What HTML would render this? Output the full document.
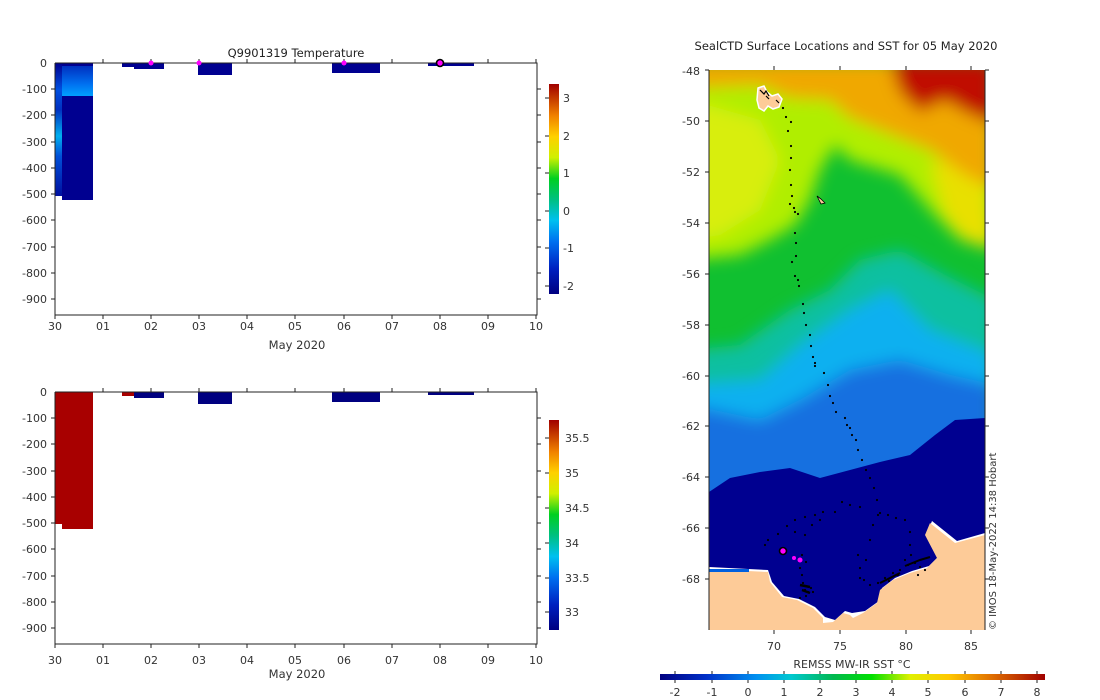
<!DOCTYPE html>
<html><head><meta charset="utf-8"><style>
html,body{margin:0;padding:0;background:#fff;width:1100px;height:700px;overflow:hidden}
svg text{font-family:"DejaVu Sans","Liberation Sans",sans-serif;font-size:11px;fill:#333}
</style></head><body>
<svg width="1100" height="700" viewBox="0 0 1100 700" xmlns="http://www.w3.org/2000/svg">
<defs>
<linearGradient id="jetv" x1="0" y1="1" x2="0" y2="0">
<stop offset="0" stop-color="#000080"/><stop offset="0.12" stop-color="#0020c0"/><stop offset="0.25" stop-color="#0070f0"/><stop offset="0.35" stop-color="#00c0f0"/><stop offset="0.45" stop-color="#00c080"/><stop offset="0.55" stop-color="#00d020"/><stop offset="0.65" stop-color="#d0f000"/><stop offset="0.75" stop-color="#ffd000"/><stop offset="0.85" stop-color="#f08000"/><stop offset="1" stop-color="#a00000"/>
</linearGradient>
<linearGradient id="jeth" x1="0" y1="0" x2="1" y2="0">
<stop offset="0" stop-color="#000080"/><stop offset="0.12" stop-color="#0030c8"/><stop offset="0.25" stop-color="#0090f0"/><stop offset="0.34" stop-color="#00c8d0"/><stop offset="0.45" stop-color="#00b850"/><stop offset="0.55" stop-color="#00e000"/><stop offset="0.65" stop-color="#e0f000"/><stop offset="0.75" stop-color="#ffc800"/><stop offset="0.86" stop-color="#e07000"/><stop offset="1" stop-color="#a00000"/>
</linearGradient>
<linearGradient id="col1" x1="0" y1="0" x2="0" y2="1">
<stop offset="0" stop-color="#000090"/><stop offset="0.2" stop-color="#0050e0"/><stop offset="0.35" stop-color="#0030c0"/><stop offset="0.55" stop-color="#00b0f0"/><stop offset="0.7" stop-color="#0050d8"/><stop offset="1" stop-color="#0010a0"/>
</linearGradient>
<linearGradient id="col2" x1="0" y1="0" x2="0" y2="1">
<stop offset="0" stop-color="#0030c0"/><stop offset="0.6" stop-color="#0070f0"/><stop offset="1" stop-color="#00a0ff"/>
</linearGradient>
<filter id="bl" x="-10%" y="-10%" width="120%" height="120%"><feGaussianBlur stdDeviation="8"/></filter>
<clipPath id="mapc"><rect x="709" y="70" width="276" height="560"/></clipPath>
</defs>

<!-- TOP PLOT -->
<text x="296" y="57" text-anchor="middle" style="font-size:11.5px;fill:#222">Q9901319  Temperature</text>
<rect x="55" y="63" width="7" height="133" fill="url(#col1)"/>
<rect x="62" y="63" width="31" height="137" fill="#000090"/>
<rect x="62" y="66" width="31" height="30" fill="url(#col2)"/>
<rect x="122" y="63" width="12" height="4" fill="#000090"/>
<rect x="134" y="63" width="30" height="6" fill="#000090"/>
<rect x="198" y="63" width="34" height="12" fill="#000090"/>
<rect x="332" y="63" width="48" height="10" fill="#000090"/>
<rect x="428" y="63" width="46" height="3" fill="#000090"/>
<g stroke="#222" fill="none" stroke-width="1">
<path d="M55,63V315H537V63H55"/>
<path d="M55,89h-4M55,115h-4M55,142h-4M55,168h-4M55,194h-4M55,220h-4M55,247h-4M55,273h-4M55,299h-4"/>
<path d="M537,89h4M537,115h4M537,142h4M537,168h4M537,194h4M537,220h4M537,247h4M537,273h4M537,299h4"/>
<path d="M55,315v4M103,315v4M151,315v4M199,315v4M247,315v4M295,315v4M344,315v4M392,315v4M440,315v4M488,315v4M536,315v4"/>
<path d="M103,63v-4M151,63v-4M199,63v-4M247,63v-4M295,63v-4M344,63v-4M392,63v-4M440,63v-4M488,63v-4M536,63v-4"/>
</g>
<g text-anchor="end">
<text x="47" y="67">0</text><text x="47" y="93">-100</text><text x="47" y="119">-200</text><text x="47" y="146">-300</text><text x="47" y="172">-400</text><text x="47" y="198">-500</text><text x="47" y="224">-600</text><text x="47" y="251">-700</text><text x="47" y="277">-800</text><text x="47" y="303">-900</text>
</g>
<g text-anchor="middle">
<text x="55" y="330">30</text><text x="103" y="330">01</text><text x="151" y="330">02</text><text x="199" y="330">03</text><text x="247" y="330">04</text><text x="295" y="330">05</text><text x="344" y="330">06</text><text x="392" y="330">07</text><text x="440" y="330">08</text><text x="488" y="330">09</text><text x="536" y="330">10</text>
<text x="297" y="349" style="font-size:11.5px">May 2020</text>
</g>
<circle cx="151" cy="63" r="2.5" fill="#ff00ff"/><circle cx="199" cy="63" r="2.5" fill="#ff00ff"/><circle cx="344" cy="63" r="2.5" fill="#ff00ff"/>
<circle cx="440" cy="63" r="3.5" fill="#ff00ff" stroke="#000" stroke-width="1.6"/>
<rect x="549" y="84" width="10" height="210" fill="url(#jetv)"/>
<g stroke="#222"><path d="M545,98h4M545,136h4M545,173h4M545,211h4M545,248h4M545,286h4"/></g>
<g><text x="563" y="102">3</text><text x="563" y="140">2</text><text x="563" y="177">1</text><text x="563" y="215">0</text><text x="563" y="252">-1</text><text x="563" y="290">-2</text></g>

<!-- BOTTOM PLOT -->
<rect x="55" y="392" width="7" height="132" fill="#a80000"/>
<rect x="62" y="392" width="31" height="137" fill="#a80000"/>
<rect x="122" y="392" width="12" height="4" fill="#a80000"/>
<rect x="134" y="392" width="30" height="6" fill="#000080"/>
<rect x="198" y="392" width="34" height="12" fill="#000080"/>
<rect x="332" y="392" width="48" height="10" fill="#000080"/>
<rect x="428" y="392" width="46" height="3" fill="#000080"/>
<g stroke="#222" fill="none" stroke-width="1">
<path d="M55,392V644H537V392H55"/>
<path d="M55,418h-4M55,444h-4M55,471h-4M55,497h-4M55,523h-4M55,549h-4M55,576h-4M55,602h-4M55,628h-4"/>
<path d="M537,418h4M537,444h4M537,471h4M537,497h4M537,523h4M537,549h4M537,576h4M537,602h4M537,628h4"/>
<path d="M55,644v4M103,644v4M151,644v4M199,644v4M247,644v4M295,644v4M344,644v4M392,644v4M440,644v4M488,644v4M536,644v4"/>
<path d="M103,392v-4M151,392v-4M199,392v-4M247,392v-4M295,392v-4M344,392v-4M392,392v-4M440,392v-4M488,392v-4M536,392v-4"/>
</g>
<g text-anchor="end">
<text x="47" y="396">0</text><text x="47" y="422">-100</text><text x="47" y="448">-200</text><text x="47" y="475">-300</text><text x="47" y="501">-400</text><text x="47" y="527">-500</text><text x="47" y="553">-600</text><text x="47" y="580">-700</text><text x="47" y="606">-800</text><text x="47" y="632">-900</text>
</g>
<g text-anchor="middle">
<text x="55" y="664">30</text><text x="103" y="664">01</text><text x="151" y="664">02</text><text x="199" y="664">03</text><text x="247" y="664">04</text><text x="295" y="664">05</text><text x="344" y="664">06</text><text x="392" y="664">07</text><text x="440" y="664">08</text><text x="488" y="664">09</text><text x="536" y="664">10</text>
<text x="297" y="678" style="font-size:11.5px">May 2020</text>
</g>
<rect x="549" y="420" width="10" height="210" fill="url(#jetv)"/>
<g stroke="#222"><path d="M545,438h4M545,473h4M545,508h4M545,543h4M545,578h4M545,612h4"/></g>
<g><text x="565" y="442">35.5</text><text x="565" y="477">35</text><text x="565" y="512">34.5</text><text x="565" y="547">34</text><text x="565" y="582">33.5</text><text x="565" y="616">33</text></g>

<!-- MAP -->
<text x="846" y="50" text-anchor="middle" style="font-size:11.5px;fill:#222">SealCTD Surface Locations and SST for 05 May 2020</text>
<g clip-path="url(#mapc)">
<rect x="700" y="60" width="300" height="580" fill="#10c030"/>
<g filter="url(#bl)">
<polygon fill="#b0ee00" points="690,60 995,60 995,250 960,240 935,215 900,175 850,160 835,145 820,170 810,200 795,225 770,240 740,255 690,260"/>
<polygon fill="#d8ee10" points="690,100 760,120 780,160 760,210 720,235 690,240"/>
<polygon fill="#e8e000" points="930,160 985,170 995,250 965,240 945,215"/>
<polygon fill="#f0a800" points="690,60 995,60 995,190 965,175 930,150 880,130 850,118 830,100 790,98 760,85 690,88"/>
<polygon fill="#c01000" points="890,60 995,60 995,125 965,112 945,100 920,112 900,92"/>
<polygon fill="#10c0a0" points="690,350 740,345 790,310 830,290 860,260 900,250 945,275 995,300 995,640 690,640"/>
<polygon fill="#10b0f0" points="690,385 760,380 800,345 850,310 890,290 930,330 995,355 995,640 690,640"/>
<polygon fill="#1870e0" points="690,405 760,420 800,400 850,370 900,360 950,375 995,385 995,640 690,640"/>
</g>
<polygon fill="#000090" points="709,492 730,478 760,472 790,468 820,478 850,470 880,462 910,455 935,435 955,420 985,418 985,630 709,630"/>
<polygon fill="#fff" points="709,567 768,570 772,582 784,596 799,599 815,607 825,617 835,620 845,611 852,613 865,611 879,601 882,588 895,578 912,571 929,566 939,556 927,533 932,521 957,541 985,533 985,630 709,630"/>
<polygon fill="#fdcb98" points="709,569 768,572 770,582 782,597 797,600 813,608 823,618 823,623 833,622 843,613 850,615 853,618 863,613 877,603 880,590 893,580 910,573 927,568 937,558 925,535 930,523 955,543 985,535 985,630 709,630"/>
<rect x="709" y="569" width="40" height="3" fill="#0060e0"/>
</g>
<!-- islands -->
<path d="M758,88 l6,-2 3,6 5,4 6,-2 4,5 -3,8 -6,2 -5,-3 -4,5 -5,-3 -2,-8z" fill="#fdcb98" stroke="#fff" stroke-width="1.5"/>
<path d="M760,90 l4,4 2,-3 3,5 M766,96 l3,3 M776,100 l3,3" stroke="#000" stroke-width="1.2" fill="none"/>
<path d="M817,196 l4,3 4,4 -4,1z" fill="#fdcb98" stroke="#000" stroke-width="0.8"/>
<!-- track dots -->
<g fill="#000">
<circle cx="783" cy="108" r="1.1"/><circle cx="786" cy="117" r="1.1"/><circle cx="791" cy="122" r="1.1"/><circle cx="788" cy="131" r="1.1"/><circle cx="791" cy="146" r="1.1"/><circle cx="791" cy="158" r="1.1"/><circle cx="790" cy="170" r="1.1"/><circle cx="791" cy="185" r="1.1"/><circle cx="792" cy="196" r="1.1"/><circle cx="790" cy="204" r="1.1"/><circle cx="794" cy="208" r="1.1"/><circle cx="795" cy="212" r="1.1"/><circle cx="798" cy="214" r="1.1"/><circle cx="795" cy="233" r="1.1"/><circle cx="796" cy="243" r="1.1"/><circle cx="796" cy="256" r="1.1"/><circle cx="792" cy="262" r="1.1"/><circle cx="795" cy="276" r="1.1"/><circle cx="798" cy="280" r="1.1"/><circle cx="799" cy="286" r="1.1"/><circle cx="803" cy="304" r="1.1"/><circle cx="804" cy="313" r="1.1"/><circle cx="806" cy="325" r="1.1"/><circle cx="810" cy="335" r="1.1"/><circle cx="811" cy="346" r="1.1"/><circle cx="813" cy="357" r="1.1"/><circle cx="815" cy="363" r="1.1"/><circle cx="815" cy="366" r="1.1"/><circle cx="824" cy="373" r="1.1"/><circle cx="828" cy="385" r="1.1"/><circle cx="830" cy="396" r="1.1"/><circle cx="833" cy="403" r="1.1"/><circle cx="836" cy="412" r="1.1"/><circle cx="845" cy="418" r="1.1"/><circle cx="847" cy="425" r="1.1"/><circle cx="850" cy="428" r="1.1"/><circle cx="852" cy="435" r="1.1"/><circle cx="856" cy="440" r="1.1"/><circle cx="858" cy="450" r="1.1"/><circle cx="862" cy="460" r="1.1"/><circle cx="866" cy="470" r="1.1"/><circle cx="870" cy="478" r="1.1"/><circle cx="874" cy="488" r="1.1"/><circle cx="877" cy="500" r="1.1"/><circle cx="878" cy="515" r="1.1"/><circle cx="873" cy="525" r="1.1"/><circle cx="870" cy="540" r="1.1"/><circle cx="866" cy="560" r="1.1"/><circle cx="864" cy="580" r="1.1"/>
<circle cx="860" cy="507" r="1.1"/><circle cx="850" cy="505" r="1.1"/><circle cx="842" cy="502" r="1.1"/><circle cx="835" cy="512" r="1.1"/><circle cx="823" cy="512" r="1.1"/><circle cx="815" cy="515" r="1.1"/><circle cx="805" cy="517" r="1.1"/><circle cx="795" cy="520" r="1.1"/><circle cx="787" cy="526" r="1.1"/><circle cx="778" cy="534" r="1.1"/><circle cx="768" cy="540" r="1.1"/><circle cx="765" cy="545" r="1.1"/><circle cx="795" cy="532" r="1.1"/><circle cx="805" cy="535" r="1.1"/><circle cx="812" cy="525" r="1.1"/><circle cx="820" cy="520" r="1.1"/>
<circle cx="880" cy="513" r="1.1"/><circle cx="888" cy="515" r="1.1"/><circle cx="896" cy="518" r="1.1"/><circle cx="905" cy="520" r="1.1"/><circle cx="910" cy="532" r="1.1"/><circle cx="910" cy="545" r="1.1"/><circle cx="911" cy="555" r="1.1"/><circle cx="908" cy="565" r="1.1"/><circle cx="900" cy="570" r="1.1"/><circle cx="893" cy="573" r="1.1"/><circle cx="885" cy="578" r="1.1"/><circle cx="878" cy="583" r="1.1"/><circle cx="870" cy="585" r="1.1"/><circle cx="905" cy="560" r="1.1"/><circle cx="915" cy="563" r="1.1"/><circle cx="920" cy="567" r="1.1"/><circle cx="925" cy="570" r="1.1"/><circle cx="918" cy="575" r="1.1"/><circle cx="898" cy="575" r="1.1"/><circle cx="889" cy="581" r="1.1"/><circle cx="860" cy="578" r="1.1"/><circle cx="860" cy="568" r="1.1"/><circle cx="858" cy="555" r="1.1"/>
<circle cx="800" cy="568" r="1.1"/><circle cx="802" cy="575" r="1.1"/><circle cx="803" cy="583" r="1.1"/><circle cx="805" cy="590" r="1.1"/><circle cx="808" cy="592" r="1.1"/><circle cx="811" cy="588" r="1.1"/><circle cx="806" cy="596" r="1.1"/><circle cx="800" cy="598" r="1.1"/><circle cx="813" cy="592" r="1.1"/><circle cx="802" cy="555" r="1.1"/><circle cx="806" cy="562" r="1.1"/>
</g>
<path d="M905,566 l15,-6 10,-3 M880,583 l20,-10" stroke="#000" stroke-width="2" fill="none"/>
<path d="M800,585 l10,2 M802,590 l8,3" stroke="#000" stroke-width="2.5" fill="none"/>
<circle cx="783" cy="551" r="3.5" fill="#ff00ff" stroke="#000" stroke-width="1.6"/>
<circle cx="794" cy="558" r="2" fill="#ff00ff"/><circle cx="800" cy="560" r="2.5" fill="#ff00ff"/>
<g stroke="#222" fill="none">
<path d="M709,70V630M985,70V630"/>
<path d="M709,70h-4M709,121h-4M709,172h-4M709,223h-4M709,274h-4M709,325h-4M709,376h-4M709,426h-4M709,477h-4M709,528h-4M709,579h-4"/>
<path d="M985,70h4M985,121h4M985,172h4M985,223h4M985,274h4M985,325h4M985,376h4M985,426h4M985,477h4M985,528h4M985,579h4"/>
<path d="M774,630v4M840,630v4M906,630v4M971,630v4M774,70v-4M840,70v-4M906,70v-4M971,70v-4"/>
</g>
<g text-anchor="end">
<text x="700" y="75">-48</text><text x="700" y="125">-50</text><text x="700" y="176">-52</text><text x="700" y="227">-54</text><text x="700" y="278">-56</text><text x="700" y="329">-58</text><text x="700" y="380">-60</text><text x="700" y="430">-62</text><text x="700" y="481">-64</text><text x="700" y="532">-66</text><text x="700" y="583">-68</text>
</g>
<g text-anchor="middle">
<text x="774" y="650">70</text><text x="840" y="650">75</text><text x="906" y="650">80</text><text x="971" y="650">85</text>
<text x="852" y="668">REMSS MW-IR SST °C</text>
</g>
<text transform="translate(996,630) rotate(-90)" style="font-size:10px">© IMOS 18-May-2022 14:38 Hobart</text>
<rect x="660" y="674" width="385" height="6" fill="url(#jeth)"/>
<g stroke="#222"><path d="M675,674v-3M712,674v-3M748,674v-3M784,674v-3M820,674v-3M856,674v-3M892,674v-3M928,674v-3M965,674v-3M1001,674v-3M1037,674v-3M675,680v3M712,680v3M748,680v3M784,680v3M820,680v3M856,680v3M892,680v3M928,680v3M965,680v3M1001,680v3M1037,680v3"/></g>
<g text-anchor="middle">
<text x="675" y="696">-2</text><text x="712" y="696">-1</text><text x="748" y="696">0</text><text x="784" y="696">1</text><text x="820" y="696">2</text><text x="856" y="696">3</text><text x="892" y="696">4</text><text x="928" y="696">5</text><text x="965" y="696">6</text><text x="1001" y="696">7</text><text x="1037" y="696">8</text>
</g>
</svg>
</body></html>
